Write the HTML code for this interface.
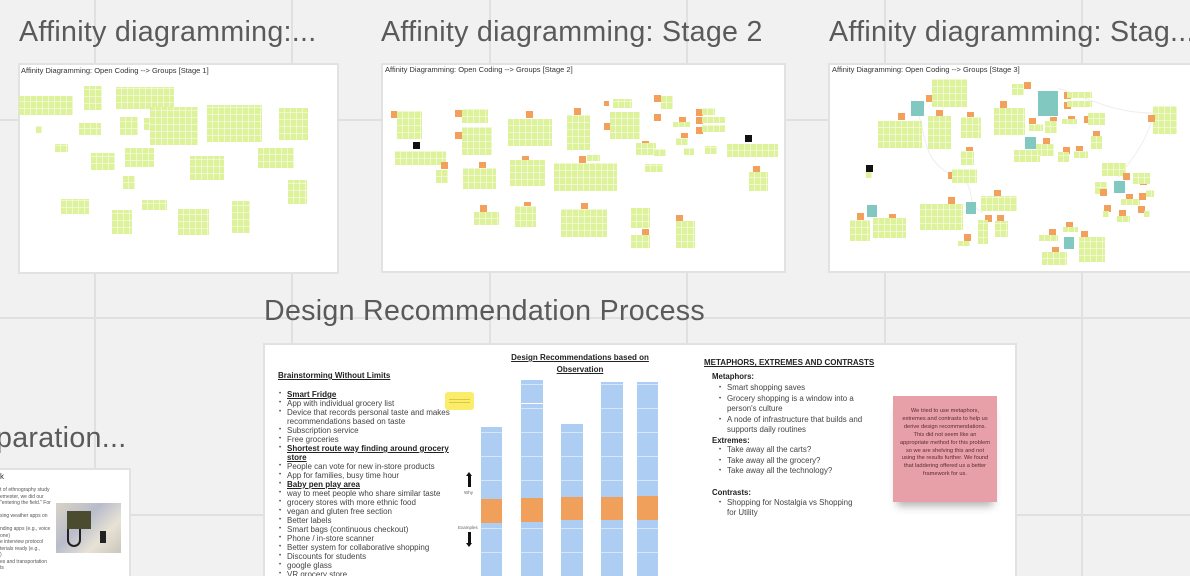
<!DOCTYPE html>
<html><head><meta charset="utf-8">
<style>
*{margin:0;padding:0;box-sizing:border-box}
html,body{width:1190px;height:576px;overflow:hidden}
body{position:relative;background:#f1f1f1;font-family:"Liberation Sans",sans-serif;color:#333}
.vl{position:absolute;top:0;height:576px;width:2px;background:#e0e0e0}
.hl{position:absolute;left:0;width:1190px;height:2px;background:#e0e0e0}
.t{position:absolute;font-size:28.6px;color:#5a5a5a;white-space:nowrap;letter-spacing:0.3px}
.f{position:absolute;background:#fff;border:2px solid #e2e2e2}
.fl{position:absolute;font-size:7.5px;color:#333;white-space:nowrap}
.g{position:absolute;background-color:#ddf29b;background-image:repeating-linear-gradient(90deg,transparent 0 5px,rgba(255,255,255,.5) 5px 6px),repeating-linear-gradient(0deg,transparent 0 6px,rgba(255,255,255,.5) 6px 7px)}
.o{position:absolute;width:7px;height:7px;background:#f2a05c}
.k{position:absolute;width:7px;height:7px;background:#111}
.q{position:absolute;background:#80c8c0}
.b{position:absolute;background-color:#aecdf2;background-image:repeating-linear-gradient(0deg,transparent 0 23px,rgba(255,255,255,.5) 23px 24px)}
.or{position:absolute;background:#f0a05a}
ul{list-style:none}
.lc li{position:relative;padding-left:9px;font-size:8px;line-height:9px;color:#444}
.lc li:before{content:"•";position:absolute;left:1px;font-size:6px}
.u{text-decoration:underline;font-weight:bold;color:#222}
</style></head><body>
<div class="vl" style="left:94px"></div><div class="vl" style="left:291px"></div><div class="vl" style="left:489px"></div><div class="vl" style="left:686px"></div><div class="vl" style="left:884px"></div><div class="vl" style="left:1081px"></div>
<div class="hl" style="top:119px"></div><div class="hl" style="top:317px"></div><div class="hl" style="top:514px"></div>

<div class="t" style="left:19px;top:16px">Affinity diagramming:...</div>
<div class="t" style="left:381px;top:16px">Affinity diagramming: Stage 2</div>
<div class="t" style="left:829px;top:16px">Affinity diagramming: Stag...</div>
<div class="t" style="left:264px;top:295px">Design Recommendation Process</div>
<div class="t" style="left:-4px;top:422px">paration...</div>

<!-- Frame 1 -->
<div class="f" style="left:18px;top:63px;width:321px;height:211px"></div>
<div class="fl" style="left:21px;top:66px">Affinity Diagramming: Open Coding --&gt; Groups [Stage 1]</div>
<div class="g" style="left:19px;top:96px;width:54px;height:19px"></div>
<div class="g" style="left:84px;top:86px;width:18px;height:24px"></div>
<div class="g" style="left:116px;top:87px;width:58px;height:22px"></div>
<div class="g" style="left:150px;top:107px;width:48px;height:38px"></div>
<div class="g" style="left:207px;top:105px;width:55px;height:37px"></div>
<div class="g" style="left:279px;top:108px;width:29px;height:32px"></div>
<div class="g" style="left:79px;top:123px;width:22px;height:12px"></div>
<div class="g" style="left:120px;top:117px;width:18px;height:18px"></div>
<div class="g" style="left:144px;top:118px;width:6px;height:12px"></div>
<div class="g" style="left:36px;top:126px;width:6px;height:7px"></div>
<div class="g" style="left:55px;top:144px;width:13px;height:8px"></div>
<div class="g" style="left:91px;top:153px;width:24px;height:17px"></div>
<div class="g" style="left:125px;top:148px;width:29px;height:19px"></div>
<div class="g" style="left:190px;top:156px;width:34px;height:24px"></div>
<div class="g" style="left:258px;top:148px;width:36px;height:20px"></div>
<div class="g" style="left:123px;top:176px;width:12px;height:13px"></div>
<div class="g" style="left:61px;top:199px;width:28px;height:15px"></div>
<div class="g" style="left:142px;top:200px;width:25px;height:10px"></div>
<div class="g" style="left:112px;top:210px;width:20px;height:24px"></div>
<div class="g" style="left:178px;top:209px;width:31px;height:26px"></div>
<div class="g" style="left:232px;top:201px;width:18px;height:32px"></div>
<div class="g" style="left:288px;top:180px;width:19px;height:24px"></div>

<!-- Frame 2 -->
<div class="f" style="left:381px;top:63px;width:405px;height:210px"></div>
<div class="fl" style="left:385px;top:65px">Affinity Diagramming: Open Coding --&gt; Groups [Stage 2]</div>
<div class="o" style="left:391px;top:111px"></div><div class="g" style="left:397px;top:111px;width:25px;height:28px"></div>
<div class="k" style="left:413px;top:142px"></div>
<div class="g" style="left:395px;top:151px;width:51px;height:14px"></div>
<div class="o" style="left:441px;top:162px"></div><div class="g" style="left:436px;top:170px;width:12px;height:13px"></div>
<div class="o" style="left:455px;top:110px"></div><div class="g" style="left:462px;top:109px;width:26px;height:14px"></div>
<div class="o" style="left:455px;top:132px"></div><div class="g" style="left:462px;top:127px;width:30px;height:28px"></div>
<div class="o" style="left:479px;top:162px"></div><div class="g" style="left:463px;top:168px;width:33px;height:21px"></div>
<div class="o" style="left:526px;top:111px"></div><div class="g" style="left:508px;top:119px;width:44px;height:27px"></div>
<div class="o" style="left:574px;top:108px"></div><div class="g" style="left:567px;top:115px;width:23px;height:35px"></div>
<div class="o" style="left:604px;top:101px;width:5px;height:5px"></div><div class="g" style="left:613px;top:99px;width:19px;height:9px"></div>
<div class="o" style="left:604px;top:123px"></div><div class="g" style="left:610px;top:112px;width:30px;height:27px"></div>
<div class="o" style="left:654px;top:95px"></div><div class="g" style="left:661px;top:96px;width:12px;height:13px"></div>
<div class="o" style="left:654px;top:114px"></div>
<div class="o" style="left:679px;top:117px"></div><div class="g" style="left:673px;top:122px;width:17px;height:5px"></div>
<div class="o" style="left:681px;top:133px"></div><div class="g" style="left:676px;top:138px;width:12px;height:7px"></div>
<div class="o" style="left:696px;top:109px"></div><div class="g" style="left:702px;top:108px;width:13px;height:7px"></div>
<div class="o" style="left:696px;top:117px"></div><div class="g" style="left:702px;top:117px;width:23px;height:6px"></div>
<div class="o" style="left:696px;top:127px"></div><div class="g" style="left:702px;top:125px;width:23px;height:7px"></div>
<div class="k" style="left:745px;top:135px"></div><div class="g" style="left:727px;top:144px;width:51px;height:13px"></div>
<div class="o" style="left:753px;top:166px"></div><div class="g" style="left:749px;top:172px;width:19px;height:19px"></div>
<div class="o" style="left:522px;top:156px"></div><div class="g" style="left:510px;top:160px;width:35px;height:26px"></div>
<div class="o" style="left:579px;top:156px"></div><div class="g" style="left:554px;top:163px;width:63px;height:28px"></div>
<div class="o" style="left:480px;top:205px"></div><div class="g" style="left:474px;top:212px;width:25px;height:13px"></div>
<div class="o" style="left:524px;top:202px"></div><div class="g" style="left:515px;top:206px;width:21px;height:21px"></div>
<div class="o" style="left:581px;top:203px"></div><div class="g" style="left:561px;top:209px;width:46px;height:28px"></div>
<div class="g" style="left:631px;top:208px;width:19px;height:20px"></div><div class="o" style="left:642px;top:229px"></div><div class="g" style="left:631px;top:235px;width:19px;height:13px"></div>
<div class="o" style="left:676px;top:215px"></div><div class="g" style="left:676px;top:221px;width:19px;height:27px"></div>
<div class="o" style="left:642px;top:141px"></div><div class="g" style="left:636px;top:143px;width:20px;height:12px"></div>
<div class="g" style="left:645px;top:164px;width:18px;height:8px"></div><div class="g" style="left:587px;top:155px;width:13px;height:6px"></div>
<div class="g" style="left:654px;top:149px;width:12px;height:7px"></div><div class="g" style="left:684px;top:148px;width:10px;height:7px"></div><div class="g" style="left:705px;top:146px;width:12px;height:8px"></div>

<!-- Frame 3 -->
<div class="f" style="left:828px;top:63px;width:370px;height:210px"></div>
<div class="fl" style="left:832px;top:65px">Affinity Diagramming: Open Coding --&gt; Groups [Stage 3]</div>
<svg style="position:absolute;left:828px;top:63px" width="362" height="210"><path d="M90 50 C100 80 95 100 130 115 C150 120 135 140 155 150 M230 25 C270 40 290 50 325 50 C320 80 300 100 290 115" fill="none" stroke="#eee" stroke-width="1"/></svg>
<div class="q" style="left:911px;top:101px;width:13px;height:15px"></div><div class="o" style="left:926px;top:95px"></div>
<div class="g" style="left:932px;top:79px;width:35px;height:28px"></div>
<div class="o" style="left:898px;top:113px"></div><div class="g" style="left:878px;top:121px;width:44px;height:27px"></div>
<div class="o" style="left:936px;top:110px"></div><div class="g" style="left:928px;top:116px;width:23px;height:33px"></div>
<div class="o" style="left:967px;top:112px"></div><div class="g" style="left:961px;top:117px;width:20px;height:21px"></div>
<div class="o" style="left:966px;top:147px"></div><div class="g" style="left:961px;top:151px;width:13px;height:14px"></div>
<div class="o" style="left:948px;top:172px"></div><div class="g" style="left:952px;top:169px;width:25px;height:14px"></div>
<div class="k" style="left:866px;top:165px"></div><div class="g" style="left:866px;top:172px;width:6px;height:6px"></div>
<div class="q" style="left:867px;top:205px;width:10px;height:12px"></div><div class="o" style="left:857px;top:213px"></div><div class="o" style="left:889px;top:214px"></div>
<div class="g" style="left:850px;top:220px;width:20px;height:21px"></div><div class="g" style="left:873px;top:218px;width:33px;height:20px"></div>
<div class="o" style="left:948px;top:197px"></div><div class="g" style="left:920px;top:204px;width:43px;height:26px"></div>
<div class="q" style="left:966px;top:202px;width:10px;height:12px"></div>
<div class="o" style="left:964px;top:234px"></div><div class="g" style="left:958px;top:241px;width:12px;height:5px"></div>
<div class="o" style="left:994px;top:190px"></div><div class="g" style="left:981px;top:196px;width:36px;height:15px"></div>
<div class="o" style="left:985px;top:215px"></div><div class="g" style="left:978px;top:220px;width:10px;height:24px"></div>
<div class="o" style="left:997px;top:215px"></div><div class="g" style="left:995px;top:221px;width:13px;height:16px"></div>
<div class="g" style="left:1012px;top:84px;width:12px;height:11px"></div><div class="o" style="left:1024px;top:82px"></div>
<div class="q" style="left:1038px;top:91px;width:20px;height:25px"></div>
<div class="o" style="left:1064px;top:92px"></div><div class="g" style="left:1067px;top:92px;width:25px;height:6px"></div>
<div class="o" style="left:1064px;top:102px"></div><div class="g" style="left:1067px;top:101px;width:25px;height:6px"></div>
<div class="o" style="left:1000px;top:101px"></div><div class="g" style="left:994px;top:108px;width:31px;height:27px"></div>
<div class="o" style="left:1029px;top:118px"></div><div class="g" style="left:1029px;top:124px;width:14px;height:7px"></div>
<div class="o" style="left:1050px;top:117px"></div><div class="g" style="left:1045px;top:121px;width:12px;height:12px"></div>
<div class="o" style="left:1068px;top:116px"></div><div class="g" style="left:1062px;top:119px;width:15px;height:5px"></div>
<div class="o" style="left:1084px;top:116px"></div><div class="g" style="left:1088px;top:113px;width:17px;height:12px"></div>
<div class="g" style="left:1153px;top:106px;width:24px;height:28px"></div><div class="o" style="left:1148px;top:115px"></div>
<div class="q" style="left:1025px;top:137px;width:11px;height:12px"></div><div class="o" style="left:1043px;top:138px"></div><div class="g" style="left:1036px;top:144px;width:18px;height:12px"></div>
<div class="g" style="left:1014px;top:150px;width:26px;height:12px"></div>
<div class="o" style="left:1063px;top:147px"></div><div class="g" style="left:1058px;top:152px;width:11px;height:10px"></div>
<div class="o" style="left:1076px;top:146px"></div><div class="g" style="left:1074px;top:151px;width:14px;height:7px"></div>
<div class="o" style="left:1093px;top:131px"></div><div class="g" style="left:1091px;top:136px;width:11px;height:13px"></div>
<div class="g" style="left:1102px;top:163px;width:24px;height:13px"></div><div class="o" style="left:1123px;top:173px"></div><div class="q" style="left:1114px;top:181px;width:11px;height:12px"></div>
<div class="o" style="left:1140px;top:178px"></div><div class="g" style="left:1133px;top:173px;width:17px;height:11px"></div>
<div class="g" style="left:1095px;top:182px;width:12px;height:12px"></div><div class="o" style="left:1100px;top:189px"></div>
<div class="o" style="left:1126px;top:194px"></div><div class="g" style="left:1121px;top:199px;width:19px;height:6px"></div>
<div class="o" style="left:1139px;top:193px"></div><div class="g" style="left:1146px;top:190px;width:8px;height:7px"></div>
<div class="o" style="left:1104px;top:205px"></div><div class="g" style="left:1103px;top:211px;width:6px;height:6px"></div>
<div class="o" style="left:1119px;top:210px"></div><div class="g" style="left:1117px;top:216px;width:13px;height:6px"></div>
<div class="o" style="left:1138px;top:206px"></div><div class="g" style="left:1144px;top:211px;width:6px;height:6px"></div>
<div class="o" style="left:1066px;top:222px"></div><div class="g" style="left:1063px;top:227px;width:15px;height:5px"></div>
<div class="o" style="left:1049px;top:229px"></div><div class="g" style="left:1039px;top:235px;width:19px;height:6px"></div>
<div class="q" style="left:1064px;top:237px;width:10px;height:12px"></div>
<div class="o" style="left:1052px;top:247px"></div><div class="g" style="left:1042px;top:252px;width:25px;height:13px"></div>
<div class="o" style="left:1081px;top:231px"></div><div class="g" style="left:1079px;top:237px;width:26px;height:25px"></div>

<!-- Frame 5 (left partial) -->
<div class="f" style="left:-10px;top:468px;width:141px;height:120px"></div>
<div class="fl" style="left:0;top:472px;font-size:8px">k</div>
<div style="position:absolute;left:0;top:487px;font-size:5px;line-height:6.5px;color:#555;white-space:nowrap">t of ethnography study<br>emester, we did our<br>"entering the field." For<br><br>sing weather apps on<br><br>nding apps (e.g., voice<br>one)<br>e interview protocol<br>terials ready (e.g.,<br>)<br>es and transportation<br>ts</div>
<div style="position:absolute;left:56px;top:503px;width:65px;height:50px;background:linear-gradient(135deg,#d9d3c5,#b8bccb 40%,#e8e2d5 70%,#c9c6ba)"><div style="position:absolute;left:11px;top:8px;width:24px;height:18px;background:#4b4b30"></div><div style="position:absolute;left:44px;top:28px;width:6px;height:12px;background:#222"></div><div style="position:absolute;left:11px;top:26px;width:14px;height:18px;border:2px solid #222;border-top:none;border-radius:0 0 8px 8px"></div></div>

<!-- Frame 4 -->
<div class="f" style="left:263px;top:343px;width:754px;height:250px"></div>
<div style="position:absolute;left:278px;top:371px;font-size:8px" class="u">Brainstorming Without Limits</div>
<ul class="lc" style="position:absolute;left:278px;top:390px;width:178px">
<li><span class="u">Smart Fridge</span></li>
<li>App with individual grocery list</li>
<li>Device that records personal taste and makes recommendations based on taste</li>
<li>Subscription service</li>
<li>Free groceries</li>
<li><span class="u">Shortest route way finding around grocery</span><br><span class="u">store</span></li>
<li>People can vote for new in-store products</li>
<li>App for families, busy time hour</li>
<li><span class="u">Baby pen play area</span></li>
<li>way to meet people who share similar taste</li>
<li>grocery stores with more ethnic food</li>
<li>vegan and gluten free section</li>
<li>Better labels</li>
<li>Smart bags (continuous checkout)</li>
<li>Phone / in-store scanner</li>
<li>Better system for collaborative shopping</li>
<li>Discounts for students</li>
<li>google glass</li>
<li>VR grocery store</li>
</ul>
<div style="position:absolute;left:480px;top:352px;width:200px;text-align:center;font-size:8px;line-height:12px" class="u">Design Recommendations based on<br>Observation</div>
<div style="position:absolute;left:445px;top:392px;width:29px;height:18px;background:#fbec6a;border-radius:3px"><div style="position:absolute;left:4px;top:7px;width:21px;height:4px;border-top:1px solid #d8c84a;border-bottom:1px solid #d8c84a"></div></div>
<div style="position:absolute;left:468px;top:475px;width:3px;height:12px;background:#111"></div><div style="position:absolute;left:466px;top:472px;border:3.5px solid transparent;border-bottom:4px solid #111;border-top:none"></div>
<div style="position:absolute;left:464px;top:490px;font-size:4.5px;color:#666">Why</div>
<div style="position:absolute;left:458px;top:525px;font-size:4.5px;color:#666">Examples</div>
<div style="position:absolute;left:468px;top:532px;width:3px;height:11px;background:#111"></div><div style="position:absolute;left:466px;top:543px;border:3.5px solid transparent;border-top:4px solid #111;border-bottom:none"></div>
<div class="b" style="left:481px;top:427px;width:21px;height:149px"></div><div class="or" style="left:481px;top:499px;width:21px;height:24px"></div>
<div class="b" style="left:521px;top:380px;width:22px;height:196px"></div><div style="position:absolute;left:521px;top:403px;width:22px;height:1px;background:#fff"></div><div class="or" style="left:521px;top:498px;width:22px;height:24px"></div>
<div class="b" style="left:561px;top:424px;width:22px;height:152px"></div><div class="or" style="left:561px;top:497px;width:22px;height:23px"></div>
<div class="b" style="left:601px;top:382px;width:22px;height:194px"></div><div class="or" style="left:601px;top:497px;width:22px;height:23px"></div>
<div class="b" style="left:637px;top:382px;width:21px;height:194px"></div><div class="or" style="left:637px;top:496px;width:21px;height:24px"></div>

<div style="position:absolute;left:704px;top:358px;font-size:8px" class="u">METAPHORS, EXTREMES AND CONTRASTS</div>
<div style="position:absolute;left:712px;top:372px;font-size:7.8px;font-weight:bold;color:#222">Metaphors:</div>
<ul class="lc" style="position:absolute;left:718px;top:383px;width:150px"><li style="line-height:10.5px;font-size:7.9px">Smart shopping saves</li><li style="line-height:10.5px;font-size:7.9px">Grocery shopping is a window into a person's culture</li><li style="line-height:10.5px;font-size:7.9px">A node of infrastructure that builds and supports daily routines</li></ul>
<div style="position:absolute;left:712px;top:436px;font-size:7.8px;font-weight:bold;color:#222">Extremes:</div>
<ul class="lc" style="position:absolute;left:718px;top:445px;width:150px"><li style="line-height:10.5px;font-size:7.9px">Take away all the carts?</li><li style="line-height:10.5px;font-size:7.9px">Take away all the grocery?</li><li style="line-height:10.5px;font-size:7.9px">Take away all the technology?</li></ul>
<div style="position:absolute;left:712px;top:488px;font-size:7.8px;font-weight:bold;color:#222">Contrasts:</div>
<ul class="lc" style="position:absolute;left:718px;top:498px;width:135px"><li style="line-height:10px;font-size:7.9px">Shopping for Nostalgia vs Shopping for Utility</li></ul>
<div style="position:absolute;left:893px;top:396px;width:104px;height:106px;background:#e8a0a8;box-shadow:0 8px 8px -4px rgba(0,0,0,.3);padding:12px 6px;font-size:5.7px;line-height:7.9px;text-align:center;color:#5a2a30">We tried to use metaphors, extremes and contrasts to help us derive design recommendations. This did not seem like an appropriate method for this problem so we are shelving this and not using the results further. We found that laddering offered us a better framework for us.</div>
</body></html>
